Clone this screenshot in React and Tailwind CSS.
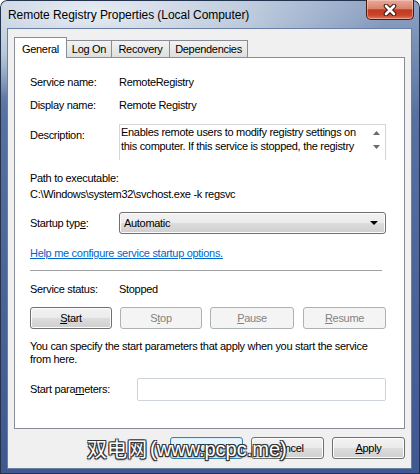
export default function App() {
  const btn =
    "h-[22px] rounded-[3px] border border-[#707070] bg-[linear-gradient(#f2f2f2_0%,#ebebeb_50%,#dddddd_50%,#cfcfcf_100%)] shadow-[inset_0_0_0_1px_#fcfcfc] flex items-center justify-center";
  const off =
    "h-[22px] rounded-[3px] border border-[#adb2b5] bg-[#f4f4f4] text-[#838383] flex items-center justify-center";

  return (
    <div className="relative w-[420px] h-[474px] overflow-hidden rounded-t-[7px] flex flex-col font-['Liberation_Sans',Arial,sans-serif] text-[11px] tracking-[-0.3px] text-black bg-[radial-gradient(ellipse_300px_90px_at_90px_12px,rgba(236,240,245,0.95)_0%,rgba(206,217,230,0.75)_55%,rgba(206,217,230,0)_100%),linear-gradient(180deg,#8ea3c4_0%,#56709f_25%,#3f5890_100%)] shadow-[inset_0_0_0_1px_#24334d]">
      {/* title bar */}
      <div className="h-[28px] flex items-start">
        <span className="ml-[8px] mt-[7px] text-[12px] leading-[16px] tracking-[-0.05px]">
          Remote Registry Properties (Local Computer)
        </span>
        <div className="ml-auto mr-[6px] w-[48px] h-[20px] rounded-b-[5px] border border-t-0 border-[#4b1a12] bg-[linear-gradient(#eaa99a_0%,#d9836d_45%,#c3391f_52%,#c8442b_80%,#e07a5c_100%)] shadow-[inset_0_0_0_1px_rgba(255,220,210,0.45)] flex items-center justify-center">
          <svg width="16" height="12" viewBox="0 0 16 12">
            <path d="M4 2 L12 10 M12 2 L4 10" stroke="#3a1a14" strokeWidth="4.6" strokeLinecap="round" />
            <path d="M4 2 L12 10 M12 2 L4 10" stroke="#ffffff" strokeWidth="2.6" strokeLinecap="round" />
          </svg>
        </div>
      </div>

      {/* client area */}
      <div className="ml-[7px] mr-[8px] mb-[5px] flex-1 bg-[#f0f0f0] border border-[#6b7ea3] flex flex-col">
        {/* tabs */}
        <div className="pl-[6px] pt-[8px] flex items-end h-[28px]">
          <div className="relative z-10 -mb-px w-[53px] h-[21px] bg-white border border-b-0 border-[#898c95] flex items-start justify-center pt-[3px]">
            General
          </div>
          <div className="-ml-px w-[46px] h-[17px] border border-b-0 border-[#898c95] bg-[linear-gradient(#f3f3f3,#dedede)] flex items-center justify-center">
            Log On
          </div>
          <div className="-ml-px w-[59px] h-[17px] border border-b-0 border-[#898c95] bg-[linear-gradient(#f3f3f3,#dedede)] flex items-center justify-center">
            Recovery
          </div>
          <div className="-ml-px w-[79px] h-[17px] border border-b-0 border-[#898c95] bg-[linear-gradient(#f3f3f3,#dedede)] flex items-center justify-center">
            Dependencies
          </div>
        </div>

        {/* tab page */}
        <div className="ml-[6px] w-[391px] h-[372px] border border-[#898c95] bg-white pl-[15px] flex flex-col">
          <div className="mt-[17px] flex leading-[15px]">
            <span className="w-[89px]">Service name:</span>
            <span>RemoteRegistry</span>
          </div>
          <div className="mt-[8px] flex leading-[15px]">
            <span className="w-[89px]">Display name:</span>
            <span>Remote Registry</span>
          </div>
          <div className="mt-[11px] flex">
            <span className="w-[89px] pt-[4px] leading-[15px]">Description:</span>
            <div className="w-[267px] h-[36px] border border-[#d3d6da] border-b-0 flex">
              <div className="flex-1 pl-[1px] leading-[14px] whitespace-nowrap overflow-hidden">
                <div>Enables remote users to modify registry settings on</div>
                <div>this computer. If this service is stopped, the registry</div>
              </div>
              <div className="w-[17px] flex flex-col items-center pt-[6px] gap-[10px]">
                <svg width="7" height="4" viewBox="0 0 7 4">
                  <path d="M0 4 L3.5 0 L7 4 Z" fill="#6a6a6a" />
                </svg>
                <svg width="7" height="4" viewBox="0 0 7 4">
                  <path d="M0 0 L7 0 L3.5 4 Z" fill="#6a6a6a" />
                </svg>
              </div>
            </div>
          </div>
          <div className="mt-[10px] leading-[16px]">Path to executable:</div>
          <div className="leading-[16px]">C:\Windows\system32\svchost.exe -k regsvc</div>
          <div className="mt-[10px] flex items-center">
            <span className="w-[89px]">
              Startup typ<span className="underline">e</span>:
            </span>
            <div className="w-[267px] h-[22px] rounded-[3px] border border-[#707070] bg-[linear-gradient(#f2f2f2_0%,#ebebeb_50%,#dddddd_50%,#cfcfcf_100%)] shadow-[inset_0_0_0_1px_#fcfcfc] flex items-center pl-[4px] pr-[7px]">
              <span className="flex-1">Automatic</span>
              <svg width="8" height="4" viewBox="0 0 8 4">
                <path d="M0 0 L8 0 L4 4 Z" fill="#000" />
              </svg>
            </div>
          </div>
          <div className="mt-[11px] leading-[16px]">
            <span className="text-[#0066cc] underline">Help me configure service startup options.</span>
          </div>
          <div className="mt-[9px] w-[352px] h-px bg-[#a0a0a0]" />
          <div className="mt-[10px] flex leading-[16px]">
            <span className="w-[89px]">Service status:</span>
            <span>Stopped</span>
          </div>
          <div className="mt-[10px] flex">
            <div className={`${btn} w-[82px]`}>
              <span className="underline">S</span>tart
            </div>
            <div className={`${off} ml-[8px] w-[82px]`}>
              S<span className="underline">t</span>op
            </div>
            <div className={`${off} ml-[8px] w-[84px]`}>
              <span className="underline">P</span>ause
            </div>
            <div className={`${off} ml-[9px] w-[83px]`}>
              <span className="underline">R</span>esume
            </div>
          </div>
          <div className="mt-[11px] leading-[13px] whitespace-nowrap">
            <div>You can specify the start parameters that apply when you start the service</div>
            <div>from here.</div>
          </div>
          <div className="mt-[12px] flex items-center">
            <span className="w-[107px]">
              Start para<span className="underline">m</span>eters:
            </span>
            <div className="w-[249px] h-[23px] rounded-[2px] border border-[#cdd3da] bg-white" />
          </div>
        </div>

        {/* dialog buttons */}
        <div className="mt-[8px] pr-[6px] flex justify-end gap-[8px]">
          <div className="w-[73px] h-[22px] rounded-[3px] border border-[#3c7fb1] bg-[linear-gradient(#eaf6fd_0%,#d9f0fc_50%,#bee6fd_50%,#a7d9f5_100%)] shadow-[inset_0_0_0_1px_#d6eefb] flex items-center justify-center">
            OK
          </div>
          <div className={`${btn} w-[73px]`}>Cancel</div>
          <div className={`${btn} w-[73px]`}>
            <span className="underline">A</span>pply
          </div>
        </div>
      </div>

      {/* watermark */}
      <div className="absolute left-[87px] top-[436px] flex items-center gap-[3px] text-white tracking-normal [text-shadow:1px_1px_0_#333,-1px_-1px_0_#333,1px_-1px_0_#333,-1px_1px_0_#333,0_1px_2px_#000]">
        <span className="text-[20px] leading-[26px] font-['Noto_Sans_CJK_SC',sans-serif]">双电网</span>
        <span className="text-[20px] leading-[26px] font-['Liberation_Sans',Arial,sans-serif]">(www.pcpc.me)</span>
      </div>
    </div>
  );
}
